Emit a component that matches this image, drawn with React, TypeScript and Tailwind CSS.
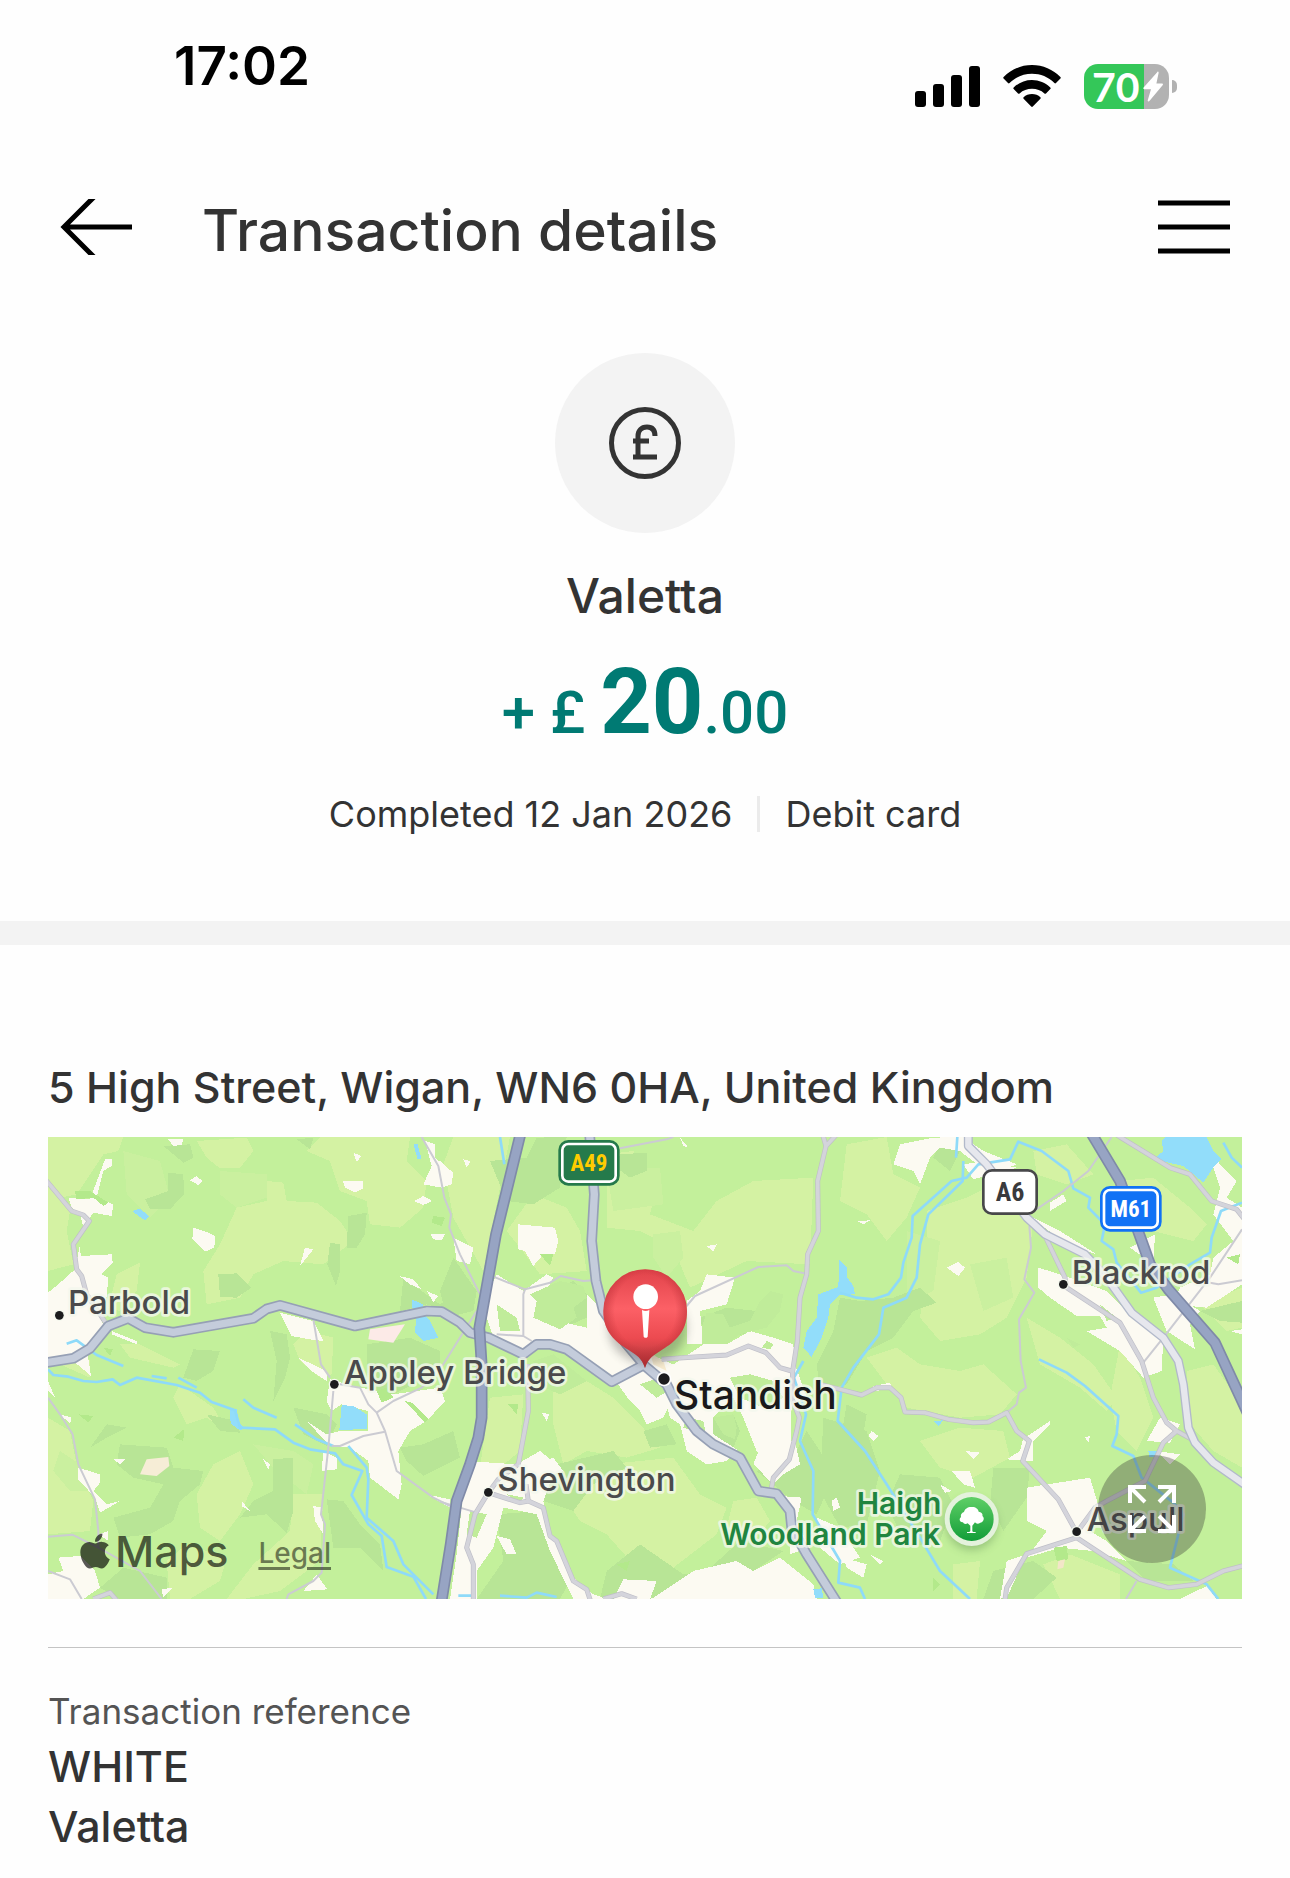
import React from 'react';
import { FaApple } from 'react-icons/fa';

// Map geometry: three units per pixel, origin at the tile corner (24, 18)
const LIGHT_FIELDS = [
  'M24 18H250L235 60 190 70 110 190 60 200 24 150Z',
  'M24 150 90 240 80 300 100 400 24 420Z',
  'M470 30 620 20 640 60 600 110 540 112 500 80Z',
  'M680 150 730 155 740 210 830 215 900 270 940 330 850 400 730 390 640 430 600 500 500 520 490 420 540 340 590 230 680 210Z',
  'M840 18H1110L1100 90 1160 150 1150 230 1080 290 990 280 980 210 900 180 870 90 800 60Z',
  'M230 430 300 395 290 480 240 540 205 530Z',
  'M240 640 300 640 420 700 400 710 270 680Z',
  'M800 600 880 620 875 730 840 740 780 690 760 640Z',
  'M24 860 90 900 110 1000 160 1110 150 1200 24 1210Z',
  'M110 640 150 690 150 740 60 700Z',
  'M420 760 520 830 560 900 500 860 440 880 400 800Z',
  'M520 1000 600 960 640 1060 600 1150 540 1230 480 1190 470 1090Z',
  'M760 1090 850 1090 840 1290 720 1380 610 1404H560L640 1300 750 1200Z',
  'M380 1290 440 1240 560 1280 540 1350 450 1404H390Z',
  'M1240 18H1410L1370 220 1330 420 1240 260 1210 100Z',
  'M1480 190 1580 230 1620 300 1640 420 1500 430 1440 350 1400 300Z',
  'M1700 70 1780 60 1850 170 1830 250 1960 300 2030 210 2140 150 2320 140 2310 400 2120 390 1950 470 1900 350 1800 300 1700 290Z',
  'M1540 780 1640 750 1720 800 1800 880 1860 950 1760 980 1640 960 1570 1000 1540 880Z',
  'M1350 800 1450 790 1440 960 1380 1010 1320 1010Z',
  'M1700 1000 1900 980 1980 1090 2060 1130 2030 1210 1900 1310 1780 1300 1700 1210 1620 1170 1560 1080Z',
  'M2080 1110 2150 1100 2190 1170 2150 1220 2060 1190Z',
  'M2420 40 2540 18 2560 130 2640 170 2600 260 2540 330 2480 250 2400 210Z',
  'M2660 240 2780 200 2880 150 2980 270 2960 440 2900 560 2820 610 2700 630 2640 560 2660 400Z',
  'M2480 680 2570 650 2640 700 2760 720 2830 700 2930 790 2880 850 2760 860 2600 830 2540 760Z',
  'M2960 560 3060 620 3160 700 3230 800 3200 840 3120 770 3000 700Z',
  'M3240 640 3300 740 3340 860 3290 960 3230 900 3210 800Z',
  'M3440 720 3520 700 3606 820V1010L3520 960 3450 880Z',
  'M2640 930 2760 890 2890 900 2910 980 2800 1040 2700 1010Z',
  'M2740 1300 2820 1290 2810 1404H2740Z',
  'M3010 1300 3090 1270 3240 1330 3240 1404H3060Z',
  'M3240 150 3340 140 3450 230 3500 280 3460 330 3340 300 3260 230Z',
  'M2980 60 3080 40 3160 130 3080 160 2990 130Z',
  'M3480 520 3606 470V590L3560 600Z',
];

const MID_FIELDS = [
  'M250 60 360 90 390 200 330 260 260 190Z',
  'M540 120 680 130 680 200 590 230 540 190Z',
  'M60 960 120 1000 150 1080 90 1080 40 1020Z',
  'M640 940 760 960 820 1000 800 1090 700 1010Z',
  'M1700 120 1860 110 1870 220 1720 240Z',
  'M2600 300 2700 330 2680 480 2600 520Z',
  'M2790 400 2900 380 2920 500 2830 540Z',
  'M1840 310 1920 300 1930 380 1880 440 1840 380Z',
];

const DARK_FIELDS = [
  'M385 125 430 130 432 190 390 235 330 235 315 205 385 180Z',
  'M535 430 590 427 635 470 590 500 540 498Z',
  'M925 255 980 245 975 310 950 350 920 350Z',
  'M870 335 900 340 900 420 888 465 862 400Z',
  'M690 600 740 610 750 680 735 740 700 810 710 690Z',
  'M460 655 540 660 520 720 470 750 430 740Z',
  'M980 640 1110 620 1200 660 1200 720 1060 790 1020 810 980 720Z',
  'M1090 440 1200 520 1260 480 1260 550 1160 520 1080 540Z',
  'M200 880 260 890 200 920 150 950Z',
  'M240 940 380 950 400 1010 490 1020 480 1060 420 1110 400 1170 330 1210 240 1220 220 1160 330 1130 370 1060 280 1040 230 1000Z',
  'M700 985 760 980 760 1140 740 1205 680 1150 600 1160 640 1110 700 1080Z',
  'M500 850 590 870 600 905 540 900Z',
  'M760 830 860 850 890 880 860 945 790 910Z',
  'M1080 950 1150 940 1240 900 1260 980 1200 1010 1150 1035 1100 990Z',
  'M860 1105 910 1110 960 1180 1020 1240 1030 1320 960 1250 880 1250Z',
  'M250 1310 380 1340 380 1404H240L180 1370Z',
  'M370 45 450 40 460 80 430 95Z',
  'M770 25 820 20 810 55Z',
  'M1350 90 1460 80 1490 20 1580 18 1560 170 1480 220 1400 210Z',
  'M1740 70 1820 65 1820 120 1770 140 1730 110Z',
  'M1240 380 1310 480 1300 540 1220 560 1200 480Z',
  'M1510 490 1600 450 1640 490 1640 560 1560 595 1510 560Z',
  'M1980 560 2060 530 2150 540 2140 600 2070 620 1990 600Z',
  'M2020 860 2080 850 2100 900 2080 950 2010 910Z',
  'M1810 900 1880 880 1910 940 1830 950Z',
  'M1550 1000 1720 960 1760 1010 1660 1060 1600 1140 1510 1110Z',
  'M1370 1150 1500 1140 1540 1240 1590 1350 1560 1404H1310L1390 1290Z',
  'M1700 1320 1800 1240 1930 1330 2000 1320 2100 1230 2230 1260 2140 1320 2060 1300 1960 1404H1680Z',
  'M2150 1020 2260 980 2300 900 2340 960 2380 1040 2330 1150 2260 1110Z',
  'M2350 860 2480 900 2520 1020 2480 1180 2400 1190 2340 1080Z',
  'M2400 500 2460 510 2560 500 2640 470 2690 515 2620 540 2560 620 2480 660 2420 760 2340 780 2330 700 2380 600Z',
  'M2580 1030 2700 1040 2740 1120 2700 1230 2600 1250 2540 1120Z',
  'M2860 1010 2970 1010 2960 1100 2890 1200 2850 1120Z',
  'M2860 1320 2980 1290 3050 1340 2980 1404H2830Z',
  'M3480 540 3606 510V575L3540 570Z',
  'M3260 570 3340 600 3320 640 3280 620Z',
  'M3260 1290 3400 1300 3460 1350 3320 1350Z',
  'M2710 18 2760 60 2730 120 2680 80Z',
  'M2420 820 2480 850 2470 910 2410 880Z',
];

const GREEN_FIELDS = [
  'M105 180 150 180 205 215 190 225 160 200 110 205Z',
  'M400 920 432 895 430 930Z',
  'M115 850 160 855 145 875Z',
  'M1180 255 1215 260 1205 285 1175 275Z',
  'M1010 780 1040 770 1060 800 1025 815Z',
  'M1095 810 1115 815 1165 865 1155 875Z',
  'M190 650 218 655 210 675Z',
  'M1500 370 1540 370 1530 405Z',
  'M3040 1250 3080 1245 3085 1285 3050 1290Z',
  'M3560 380 3600 370 3595 400Z',
  'M2680 1340 2700 1360 2680 1380Z',
  'M1405 820 1435 820 1430 850Z',
  'M1730 1300 1770 1290 1760 1320Z',
];

// green pockets left open inside the built-up areas
const TOWN_GREENS = [
  'M1470 490 1560 450 1630 465 1640 500 1600 530 1610 560 1560 595 1480 560 1490 510Z',
  'M2000 545 2050 550 2070 590 2130 570 2160 510 2190 480 2230 490 2220 540 2180 590 2100 610 2060 640 1985 640 1985 590Z',
  'M1940 860 1990 870 2000 920 1960 900 1930 890Z',
  'M2020 860 2080 850 2090 890 2085 925 2050 910Z',
  'M2070 740 2130 730 2200 750 2230 800 2170 830 2100 800Z',
  'M1860 740 1900 770 1850 800 1800 760Z',
  'M2180 630 2200 640 2190 655 2165 650Z',
  'M1480 690 1540 670 1640 750 1560 790 1490 760Z',
  'M1370 520 1430 560 1440 600 1380 600Z',
  'M1290 1140 1340 1150 1310 1220 1280 1210Z',
  'M1400 1090 1450 1100 1440 1120Z',
  'M3080 620 3120 640 3100 650Z',
  'M3180 520 3230 560 3200 570Z',
];

const TOWNS = [
  'M24 485 55 460 105 415 120 340 122 375 215 370 218 395 185 430 205 440 200 495 180 560 195 590 140 650 153 735 100 690 24 680Z',
  'M85 200 150 205 195 85 215 85 215 105 190 120 170 200 220 220 215 255 160 245 130 290 120 250 95 230Z',
  'M215 600 290 630 290 640 215 610Z',
  'M385 25 430 25 425 42 400 45Z',
  'M450 148 470 135 487 150 475 162Z',
  'M460 290 500 303 525 315 523 350 495 362 457 325Z',
  'M908 150 970 150 970 172 945 185 915 170Z',
  'M940 65 965 75 950 92Z',
  'M1122 210 1150 195 1177 210 1150 222Z',
  'M1155 30 1185 40 1185 80 1240 125 1235 160 1205 170 1150 160 1175 105Z',
  'M795 350 820 355 780 405Z',
  'M1172 310 1215 310 1205 328 1180 325Z',
  'M1078 435 1120 445 1145 475 1110 460Z',
  'M1160 480 1195 495 1180 513Z',
  'M720 545 820 570 850 630 810 625 755 615Z',
  'M775 680 860 720 860 750 815 720Z',
  'M870 745 940 765 1060 790 1200 770 1215 810 1160 870 1110 900 1075 960 1085 1060 1075 1105 990 1040 985 990 930 950 870 945 800 870 860 910 900 900 985 900 985 840 905 820 875 840 860 810Z',
  'M850 960 890 980 890 1015 845 1020Z',
  'M1160 1090 1230 1105 1230 1130Z',
  'M820 1125 845 1130 850 1210 825 1170Z',
  'M115 1010 180 1030 180 1055 160 1080 200 1120 240 1110 180 1145 165 1100 115 1045Z',
  'M55 1280 120 1275 165 1320 180 1370 130 1404H24V1330L70 1320Z',
  'M175 1210 205 1200 205 1230Z',
  'M605 1110 630 1140 605 1125Z',
  'M670 985 690 1000 685 1015Z',
  'M830 1330 862 1375 790 1380Z',
  'M220 985 255 985 240 1000Z',
  'M24 750 45 800 24 780Z',
  'M60 850 95 860 90 878Z',
  'M365 1375 400 1370 370 1400Z',
  'M1435 280 1545 290 1555 330 1545 370 1510 370 1480 405 1455 360 1435 355Z',
  'M1200 90 1240 130 1230 160 1200 160Z',
  'M1240 320 1300 350 1290 400 1250 390Z',
  'M1270 85 1292 90 1280 110Z',
  'M1370 430 1450 480 1520 430 1540 440 1500 520 1510 560 1640 590 1640 490 1690 540 1760 640 1900 700 1990 640 1980 540 2060 520 2085 440 2000 430 1980 480 1940 510 1940 640 2060 640 2130 600 2200 620 2260 640 2265 700 2300 800 2255 820 2250 1000 2200 1000 2150 960 2110 860 2080 800 2020 860 2020 910 2090 955 2060 990 2000 1000 1940 960 1920 880 1890 860 1880 820 1770 810 1720 740 1600 660 1530 640 1440 680 1360 620 1340 560 1350 470Z',
  'M1760 800 1890 820 1870 860 1820 880 1800 840Z',
  'M2160 950 2200 905 2210 930 2265 930 2280 1000 2230 1030 2200 1060 2140 1000Z',
  'M1280 990 1430 1000 1500 960 1550 1000 1510 1110 1530 1200 1600 1340 1660 1390 1700 1404H1600L1530 1260 1490 1150 1390 1130 1380 1170 1360 1250 1310 1320 1310 1404H1230L1250 1270Z',
  'M1370 1215 1410 1225 1430 1270 1400 1270Z',
  'M1510 990 1540 980 1570 1020 1540 1030Z',
  'M1505 845 1528 850 1520 870Z',
  'M1840 1400 1960 1320 2090 1290 2140 1320 2220 1280 2320 1360 2330 1404H1830Z',
  'M2220 1095 2285 1100 2270 1170 2310 1250 2250 1270 2250 1170Z',
  'M2330 1160 2400 1190 2460 1280 2400 1300 2340 1250Z',
  'M2375 1110 2390 1100 2400 1130 2380 1140Z',
  'M2000 345 2030 340 2020 362Z',
  'M1920 20 1945 50 1930 45Z',
  'M1720 1404 1750 1345 1850 1350 1830 1404Z',
  'M2580 40 2680 20 2770 18 2830 60 2930 100 2850 130 2760 60 2700 50 2670 80 2640 160 2620 120 2560 100Z',
  'M2770 100 2840 90 2930 110 2800 145Z',
  'M2720 410 2755 393 2775 410 2755 435Z',
  'M2450 270 2490 268 2470 280Z',
  'M2995 410 3060 430 3200 480 3280 560 3370 620 3365 720 3310 740 3240 660 3140 600 3200 590 3180 555 3110 555 3030 500 2995 470Z',
  'M3340 500 3400 490 3480 540 3450 580 3465 655 3380 600Z',
  'M2960 250 3060 300 3170 370 3080 340Z',
  'M3030 215 3070 190 3080 210 3030 240Z',
  'M3490 20 3540 100 3590 150 3560 200 3606 230V460L3500 530 3400 520 3420 470 3510 430 3520 380 3580 330 3520 250 3540 170Z',
  'M3570 600 3606 595V610Z',
  'M3270 350 3345 310 3340 400Z',
  'M3360 860 3420 880 3390 935 3320 930Z',
  'M3350 960 3420 970 3390 1000Z',
  'M2485 915 2495 900 2515 915 2500 930Z',
  'M2950 920 2970 910 3030 870 3030 880 2980 930 2980 990 2900 985 2940 960Z',
  'M2735 1020 2790 1020 2805 1070 2770 1060Z',
  'M2960 1070 3150 1040 3180 1140 3150 1200 3200 1230 3260 1290 3160 1260 3060 1250 2960 1280 3020 1200 2960 1170Z',
  'M2775 960 2820 965 2800 985Z',
  'M2700 1060 2735 1080 2715 1085Z',
  'M2410 1280 2480 1300 2470 1340 2420 1310Z',
  'M2490 1270 2530 1290 2520 1300Z',
  'M2900 1290 2960 1270 2905 1390 2880 1404Z',
  'M2500 765 2550 755 2560 775 2500 780Z',
  'M3420 1404 3500 1365 3530 1404Z',
  'M3135 920 3150 915 3145 935Z',
];

const LAKES = [
  'M3365 30 3375 18H3500L3520 60 3545 85 3520 110 3490 155 3430 105 3340 85 3370 60Z',
  'M2335 490 2395 468 2398 385 2420 410 2422 440 2440 465 2445 490 2400 492 2370 520 2365 560 2345 620 2315 678 2290 650 2300 600 2330 560Z',
  'M2400 390 2425 470 2400 490Z',
  'M905 822 940 825 980 850 982 893 898 898Z',
  'M1115 505 1150 520 1150 550 1170 570 1195 620 1150 630 1125 605 1130 540 1115 530Z',
  'M278 240 300 233 327 255 315 268 295 255Z',
  'M570 838 590 835 598 878 615 890 600 898 572 878Z',
  'M1120 38 1132 38 1145 85 1133 85Z',
  'M2320 1375 2345 1372 2350 1400 2325 1400Z',
  'M2680 870 2710 868 2695 885Z',
  'M3325 960 3350 960 3345 980 3328 978Z',
];

const STREAMS = [
  'M24 715 40 732 85 737 130 750 170 753 218 745 240 762 290 740 410 762 480 785 515 813 585 838 600 890 705 895 760 935 810 955 885 967 910 1000 967 1020 935 1092 985 1180 1025 1215 1040 1308 1120 1337 1158 1404',
  'M925 945 980 1010 985 1045 980 1160 1060 1230 1090 1300 1180 1390',
  'M80 638 110 628 170 672 250 705',
  'M335 735 380 742M415 740 470 770M610 805 640 830 710 860M765 880 830 925 880 945',
  'M1380 18 1393 100',
  'M2400 485 2450 500 2500 505 2545 490 2583 440 2590 395 2615 320 2618 255 2735 150 2780 140 2815 100 2910 85 2935 32 3005 60 3085 120 3100 172 3150 200 3145 230 3195 280 3185 330 3220 355 3230 395 3303 485 3350 470 3450 400 3510 365 3515 320 3543 240 3606 215',
  'M2752 18 2748 80M2770 90 2768 150 2665 250 2640 340 2630 440 2600 500 2530 530 2517 610 2440 710 2405 770 2393 870 2475 960 2540 1060 2640 1220 2700 1320 2790 1404',
  'M2290 690 2262 740 2298 850 2280 930 2320 1020 2318 1150 2400 1290 2395 1355 2460 1370 2475 1404',
  'M2997 685 3080 725 3135 765 3235 855 3230 910 3217 945 3280 975 3305 1040 3400 1115 3430 1150 3390 1310 3500 1360 3535 1404',
  'M3550 35 3575 80 3606 110',
  'M1255 1394 1300 1394M1380 1394 1460 1400 1490 1385 1550 1398',
];

const LANES = [
  'M1145 18 1195 105 1213 200 1233 250 1228 290 1260 370 1320 490',
  'M820 565 843 700 870 740',
  'M880 780 865 950 843 1150 855 1180 845 1325 820 1350 745 1390 740 1404',
  'M900 760 960 770 985 820 1010 845 1035 900 1070 1020 1180 1100 1230 1125',
  'M1010 845 1060 810 1145 770 1210 700 1310 540',
  'M875 945 900 945 970 915 1035 902',
  'M24 800 60 850 98 910 115 1000 165 1105 175 1200 175 1250',
  'M24 1217 97 1211 175 1250 300 1320 365 1404',
  'M24 1320 90 1345 125 1404',
  'M1360 437 1455 475 1530 455 1562 435 1630 450 1660 448',
  'M1455 475 1450 490 1450 615M1370 610 1450 615 1475 630',
  'M1740 52 1880 25 1900 18',
  'M1940 525 1965 495 2155 408 2240 403 2260 420 2300 428',
  'M1200 1112 1310 1145',
  'M3215 18 3145 120 3070 180 2975 245',
  'M2968 285 2973 350 2953 445 2983 485 2937 565 2942 690 2958 770 2937 785 2930 820 2900 845',
  'M3606 295 3510 440 3370 620 3310 695',
  'M3510 455 3535 460 3606 448',
  'M3290 1350 3258 1404',
];

const MINOR_ROADS = [
  'M10 138 95 240 130 252 148 270 100 340 110 415 125 435 140 490 200 580',
  'M2345 0 2358 45M2395 5 2358 45 2333 150 2335 300 2303 370 2300 430 2280 500 2272 630 2258 720 2255 800 2278 860 2270 900 2248 985 2200 1040 2193 1080',
  'M1865 685 1930 680 2060 672 2125 645 2178 665 2220 710 2255 720',
  'M2340 760 2400 775 2465 792 2510 770 2550 770 2583 800 2595 843 2655 845 2725 865 2800 875 2845 873 2900 845 2930 900 2968 930 2948 990 3055 1105 3110 1205',
  'M3110 1220 2960 1268 2900 1370 2893 1420',
  'M3110 1220 3300 1345 3385 1370 3470 1360 3550 1320 3620 1302',
  'M3110 1205 3165 1130 3200 1110 3315 1050 3370 935 3410 900',
  'M3015 315 3075 440 3080 470 3240 575 3305 690 3340 800 3380 875 3410 900 3465 930',
  'M3220 5 3240 18 3390 110 3450 130 3515 210 3590 235 3616 268',
  'M1345 1085 1305 1150 1280 1250 1300 1300 1300 1420',
  'M1345 1085 1440 1115 1465 1110 1510 1130 1530 1215 1550 1230 1600 1350 1640 1375 1655 1420',
  'M1463 700 1465 840 1450 920 1435 1000 1375 1045 1345 1085M1458 1060 1465 1110',
  'M160 1404 210 1385 235 1414M1690 1404 1745 1388 1790 1404',
];

const A_ROADS = [
  'M0 698 100 682 150 652 205 585 265 562 315 590 400 604 640 562 680 534 720 523 945 585 1160 540 1205 542 1260 575 1290 605 1345 620 1450 670 1490 640 1530 640 1580 655 1715 752 1815 700',
  'M1648 0 1663 190 1655 330 1668 450 1690 540 1760 640 1815 705 1880 760 1910 820 1970 900 2020 940 2100 980 2155 1080 2210 1088 2250 1140 2255 1190 2300 1270 2405 1436',
];

const A6_ROAD = 'M2785 0 2785 45 2840 100 2960 260 3015 310 3135 370 3200 440 3275 545 3370 620 3415 690 3430 760 3445 890 3465 935 3520 995 3630 1072';

const MOTORWAYS = [
  'M1446 -10 1368 310 1318 590 1325 700 1325 860 1315 920 1290 1000 1250 1110 1232 1240 1200 1440',
  'M3150 0 3240 150 3305 330 3330 400 3385 475 3525 635 3640 883',
];

const PLACES = [
  { name: 'Parbold', x: 84, y: 550, dotX: 58, dotY: 553 },
  { name: 'Appley Bridge', x: 912, y: 759, dotX: 883, dotY: 760 },
  { name: 'Shevington', x: 1372, y: 1081, dotX: 1345, dotY: 1084 },
  { name: 'Blackrod', x: 3095, y: 458, dotX: 3070, dotY: 460 },
  { name: 'Aspull', x: 3140, y: 1199, dotX: 3110, dotY: 1202 },
];

const SHIELD_FONT = "'Roboto Condensed', 'Open Sans Condensed', Roboto, sans-serif";

function Shapes({ paths, fill }: { paths: string[]; fill: string }) {
  return (
    <g fill={fill} shapeRendering="crispEdges">
      {paths.map(d => <path key={d} d={d} />)}
    </g>
  );
}

function Roads({ paths, color, width }: { paths: string[]; color: string; width: number }) {
  return (
    <g fill="none" stroke={color} strokeWidth={width} strokeLinejoin="round">
      {paths.map(d => <path key={d} d={d} />)}
    </g>
  );
}

function RouteShield({ label, x, y, width, fill, inner, color }: {
  label: string; x: number; y: number; width: number; fill: string; inner: string; color: string;
}) {
  return (
    <g>
      <rect x={x} y={y} width={width} height="137" rx="30" fill={fill} />
      <rect x={x + 12} y={y + 12} width={width - 24} height="113" rx="18" fill={fill} stroke={inner} strokeWidth="8" />
      <text
        x={x + width / 2} y={y + 93} textAnchor="middle" fill={color}
        fontSize="69" fontWeight="700" fontFamily={SHIELD_FONT}
      >
        {label}
      </text>
    </g>
  );
}

function AreaMap() {
  return (
    <svg
      viewBox="24 18 3582 1386"
      preserveAspectRatio="xMidYMid slice"
      className="block h-full w-full"
      fontFamily="Inter, sans-serif"
      role="img"
      aria-label="Map of Standish"
    >
      <defs>
        <linearGradient id="pinFill" x1="0" y1="0" x2="0" y2="1">
          <stop offset="0" stopColor="#e0434a" />
          <stop offset="0.4" stopColor="#fc6066" />
          <stop offset="0.7" stopColor="#ec4a50" />
          <stop offset="1" stopColor="#a53437" />
        </linearGradient>
        <radialGradient id="pinEdge" cx="0.5" cy="0.42" r="0.52">
          <stop offset="0.7" stopColor="#b0282f" stopOpacity="0" />
          <stop offset="1" stopColor="#b0282f" stopOpacity="0.55" />
        </radialGradient>
        <linearGradient id="parkFill" x1="0" y1="0" x2="0" y2="1">
          <stop offset="0" stopColor="#5fcf66" />
          <stop offset="1" stopColor="#129d38" />
        </linearGradient>
        <filter id="soft" x="-50%" y="-50%" width="200%" height="200%">
          <feGaussianBlur stdDeviation="14" />
        </filter>
      </defs>

      <rect x="24" y="18" width="3582" height="1386" fill="#c3f09b" />
      <Shapes paths={LIGHT_FIELDS} fill="#d4f2a3" />
      <Shapes paths={MID_FIELDS} fill="#caf09f" />
      <Shapes paths={DARK_FIELDS} fill="#b8e596" />
      <Shapes paths={TOWNS} fill="#fcfaf2" />
      <Shapes paths={TOWN_GREENS} fill="#c0ec9a" />
      <Shapes paths={GREEN_FIELDS} fill="#b3e98b" />
      <path d="M990 595 1095 580 1060 635 985 625Z" fill="#fceae7" />
      <path d="M300 1030 320 985 385 978 388 1005 350 1035Z" fill="#f6edd6" />
      <path d="M1830 665 1870 690 1880 720 1840 700Z" fill="#f8ecd0" />
      <path d="M3055 1290 3075 1285 3070 1310 3052 1315Z" fill="#f3e6c8" />

      <Shapes paths={LAKES} fill="#92ddfa" />
      <Roads paths={STREAMS} color="#8edaf9" width={8} />
      <Roads paths={LANES} color="#cbcbd2" width={6} />
      <Roads paths={MINOR_ROADS} color="#bfbfc8" width={15} />
      <Roads paths={MINOR_ROADS} color="#d4d4db" width={11} />
      <Roads paths={[A6_ROAD]} color="#b2b9ca" width={27} />
      <Roads paths={[A6_ROAD]} color="#e6e7ed" width={19} />
      <Roads paths={A_ROADS} color="#96a0b5" width={32} />
      <Roads paths={A_ROADS} color="#c4ccdb" width={22} />
      <Roads paths={MOTORWAYS} color="#7f8aa8" width={35} />
      <Roads paths={MOTORWAYS} color="#97a4c3" width={25} />

      <RouteShield label="A49" x={1555} y={27} width={184} fill="#257a4b" inner="#ffffff" color="#ffcc00" />
      <RouteShield label="M61" x={3180} y={165} width={185} fill="#1272f5" inner="#ffffff" color="#ffffff" />
      <rect x="2830" y="118" width="160" height="130" rx="26" fill="#ffffff" stroke="#48484a" strokeWidth="8" />
      <text
        x="2910" y="211" textAnchor="middle" fill="#3a3a3c"
        fontSize="78" fontWeight="700" fontFamily={SHIELD_FONT}
      >
        A6
      </text>

      <g fill="#4a4a4c" fontSize="99" fontWeight="500" stroke="#f4f8ee" strokeOpacity="0.8" strokeWidth="16" strokeLinejoin="round" paintOrder="stroke">
        {PLACES.map(p => (
          <React.Fragment key={p.name}>
            <circle cx={p.dotX} cy={p.dotY} r="13" fill="#1c1c1e" strokeWidth="8" strokeOpacity="1" />
            <text x={p.x} y={p.y}>{p.name}</text>
          </React.Fragment>
        ))}
        <text x="1902" y="833" fontSize="117" fill="#19191b">Standish</text>
        <text fill="#20853f" fontSize="90" fontWeight="600" textAnchor="end">
          <tspan x="2704" y="1150">Haigh</tspan>
          <tspan x="2700" y="1243">Woodland Park</tspan>
        </text>
      </g>

      {/* park marker */}
      <circle cx="2795" cy="1180" r="76" fill="#3c6b3a" opacity="0.35" filter="url(#soft)" />
      <circle cx="2795" cy="1164" r="81" fill="#e4f2dc" />
      <circle cx="2795" cy="1164" r="66" fill="url(#parkFill)" />
      <path
        fill="#ffffff"
        d="M2793 1128c12-2 22 5 23 14 10 2 13 8 11 13 8 6 4 19-6 20-7 5-13 3-16-1l-8 10v16c1 4 5 3 10 3v3h-26v-3c5 0 9 0 10-3v-16l-8-7c-6 4-12 2-14-3-9 1-14-9-6-16-2-8 3-13 9-15 2-9 11-15 21-15z"
      />

      {/* merchant pin */}
      <ellipse cx="1822" cy="590" rx="118" ry="108" fill="#333333" opacity="0.3" filter="url(#soft)" />
      <circle cx="1872" cy="744" r="22" fill="#ffffff" />
      <circle cx="1872" cy="744" r="17" fill="#1c1c1e" />
      <path d="M1815 711C1805 680 1790 672 1765 656 1725 632 1690 602 1690 540a125 125 0 0 1 251 0c0 62-35 92-75 116-25 16-41 24-51 55z" fill="url(#pinFill)" />
      <path d="M1815 711C1805 680 1790 672 1765 656 1725 632 1690 602 1690 540a125 125 0 0 1 251 0c0 62-35 92-75 116-25 16-41 24-51 55z" fill="url(#pinEdge)" />
      <circle cx="1817" cy="497" r="37" fill="#ffffff" />
      <path d="M1806 537q11 6 22 0l-5 80q-6 7-12 0z" fill="#ffffff" />
    </svg>
  );
}

function StatusBar() {
  return (
    <div className="flex h-[140px] items-start justify-between pl-[174px] pr-[113px] text-black">
      <span className="pt-[34px] text-[53px] font-semibold leading-[64px]">17:02</span>
      <div className="flex items-center gap-[23px] pt-[64px]">
        <svg width="65" height="45" viewBox="0 0 65 45" aria-label="Signal">
          <rect x="0" y="27" width="11" height="16" rx="3" />
          <rect x="18" y="20" width="11" height="23" rx="3" />
          <rect x="36" y="11" width="11" height="32" rx="3" />
          <rect x="54" y="2" width="11" height="41" rx="3" />
        </svg>
        <svg width="58" height="45" viewBox="0 0 58 45" aria-label="Wi-Fi">
          <path d="M29 1C18 1 8 5.500 0.600 13q-.8.8 0 1.600L5 19q.8.8 1.600 0C12.600 13 20.500 9.800 29 9.800S45.400 13 51.400 19q.8.8 1.600 0L57.400 14.600q.8-.8 0-1.600C50 5.500 40 1 29 1z" />
          <path d="M29 16c-7 0-13.500 2.800-18.300 7.400q-.8.8 0 1.600L15 29.400q.8.8 1.600 0C20 26.400 24.300 24.800 29 24.800S38 26.400 41.400 29.400q.8.8 1.600 0L47.300 25q.8-.8 0-1.600C42.500 18.800 36 16 29 16z" />
          <path d="M29 30c-3.200 0-6.200 1.200-8.400 3.200q-.8.8 0 1.600L28.200 42.600q.8.8 1.600 0L37.400 34.800q.8-.8 0-1.600C35.200 31.200 32.200 30 29 30z" />
        </svg>
        <div className="flex items-center gap-[3px]">
          <div className="flex h-[45px] w-[85px] items-center rounded-[14px] bg-linear-to-r from-[#34c759] from-[71%] to-[#b2b2b2] to-[71%] pl-2">
            <span className="text-[41px] font-bold leading-[45px] text-white font-[Lato]">70</span>
            <svg width="20" height="32" viewBox="0 0 20 32" className="ml-[3px]" fill="#ffffff" aria-hidden="true">
              <path d="M14 1.500c.6-1.600 1.800-1 1.600.4L13.400 12.400h5.400c1.200 0 1.500.9.800 1.800L6.600 29.800c-1 1.200-2.300.6-1.800-.9L8 18.200H1.400c-1.200 0-1.500-.9-.8-1.800z" />
            </svg>
          </div>
          <div className="h-[13px] w-[5px] rounded-r-full bg-[#b2b2b2]" />
        </div>
      </div>
    </div>
  );
}

function Header() {
  return (
    <header className="flex h-[174px] items-center px-[60px]">
      <button type="button" aria-label="Back" className="shrink-0">
        <svg width="72" height="56" viewBox="0 0 72 56" fill="none" stroke="#000000" strokeWidth="5">
          <path d="M4 28H72M34-2 4 28 34 58" />
        </svg>
      </button>
      <h1 className="flex-1 pl-[70px] pt-2 text-[57px] font-medium leading-[72px]">Transaction details</h1>
      <button type="button" aria-label="Menu" className="shrink-0">
        <svg width="72" height="60" viewBox="0 0 72 60" stroke="#000000" strokeWidth="5">
          <path d="M0 6H72M0 30H72M0 54H72" />
        </svg>
      </button>
    </header>
  );
}

export default function App() {
  return (
    <div className="min-h-screen overflow-hidden bg-[#fefefe] text-[#333333] font-[Inter,sans-serif]">
      <StatusBar />
      <Header />

      <section className="flex flex-col items-center pt-[39px] pb-[83px]">
        <div className="flex size-[180px] items-center justify-center rounded-full bg-[#f3f3f3]">
          <svg width="72" height="72" viewBox="0 0 72 72" fill="none" stroke="#333333" strokeWidth="5" aria-hidden="true">
            <circle cx="36" cy="36" r="33.500" />
            <path d="M46 29c0-6-3-9-8-9-6 0-9 4-9 9V50M24 34H40M24 50H48" />
          </svg>
        </div>
        <h2 className="mt-[31px] text-[48px] font-medium leading-[64px]">Valetta</h2>
        <p className="mt-[23px] text-[60px] font-medium leading-[104px] text-[#007a73] font-[Roboto]">
          + £ <strong className="text-[90px] font-bold">20</strong>.00
        </p>
        <div className="mt-[25px] flex items-center text-[36px] leading-[48px]">
          <span>Completed 12 Jan 2026</span>
          <span className="mx-[25px] h-9 w-[3px] bg-[#ebebeb]" />
          <span>Debit card</span>
        </div>
      </section>

      <div className="h-6 bg-[#f3f3f3]" />

      <section className="px-12 pt-[112px]">
        <h3 className="text-[43px] font-medium leading-[60px]">5 High Street, Wigan, WN6 0HA, United Kingdom</h3>
        <div className="relative mt-5 h-[462px] overflow-hidden">
          <AreaMap />
          <div className="absolute bottom-5 left-[27px] flex items-center text-black/65">
            <FaApple size={40} />
            <span className="text-[43px] font-medium leading-[56px]">Maps</span>
            <a href="#legal" className="ml-[30px] pt-1 text-[28px] font-medium leading-[32px] text-black/50 underline decoration-[3px] underline-offset-4">Legal</a>
          </div>
          <button type="button" aria-label="Full screen" className="absolute bottom-9 right-9 flex size-[108px] items-center justify-center rounded-full bg-[#333333]/35">
            <svg width="48" height="48" viewBox="0 0 48 48" fill="none" stroke="#ffffff" strokeWidth="4">
              <path d="M2 18V2H18M2 2 17 17M30 2H46V18M46 2 31 17M2 30V46H18M2 46 17 31M46 30V46H30M46 46 31 31" />
            </svg>
          </button>
        </div>

        <dl className="mt-12 border-t border-[#c4c4c4] pt-[38px]">
          <dt className="text-[35px] leading-[50px] text-[#545454]">Transaction reference</dt>
          <dd className="text-[43px] font-medium leading-[60px]">WHITE</dd>
          <dd className="text-[43px] font-medium leading-[60px]">Valetta</dd>
        </dl>
      </section>
    </div>
  );
}
